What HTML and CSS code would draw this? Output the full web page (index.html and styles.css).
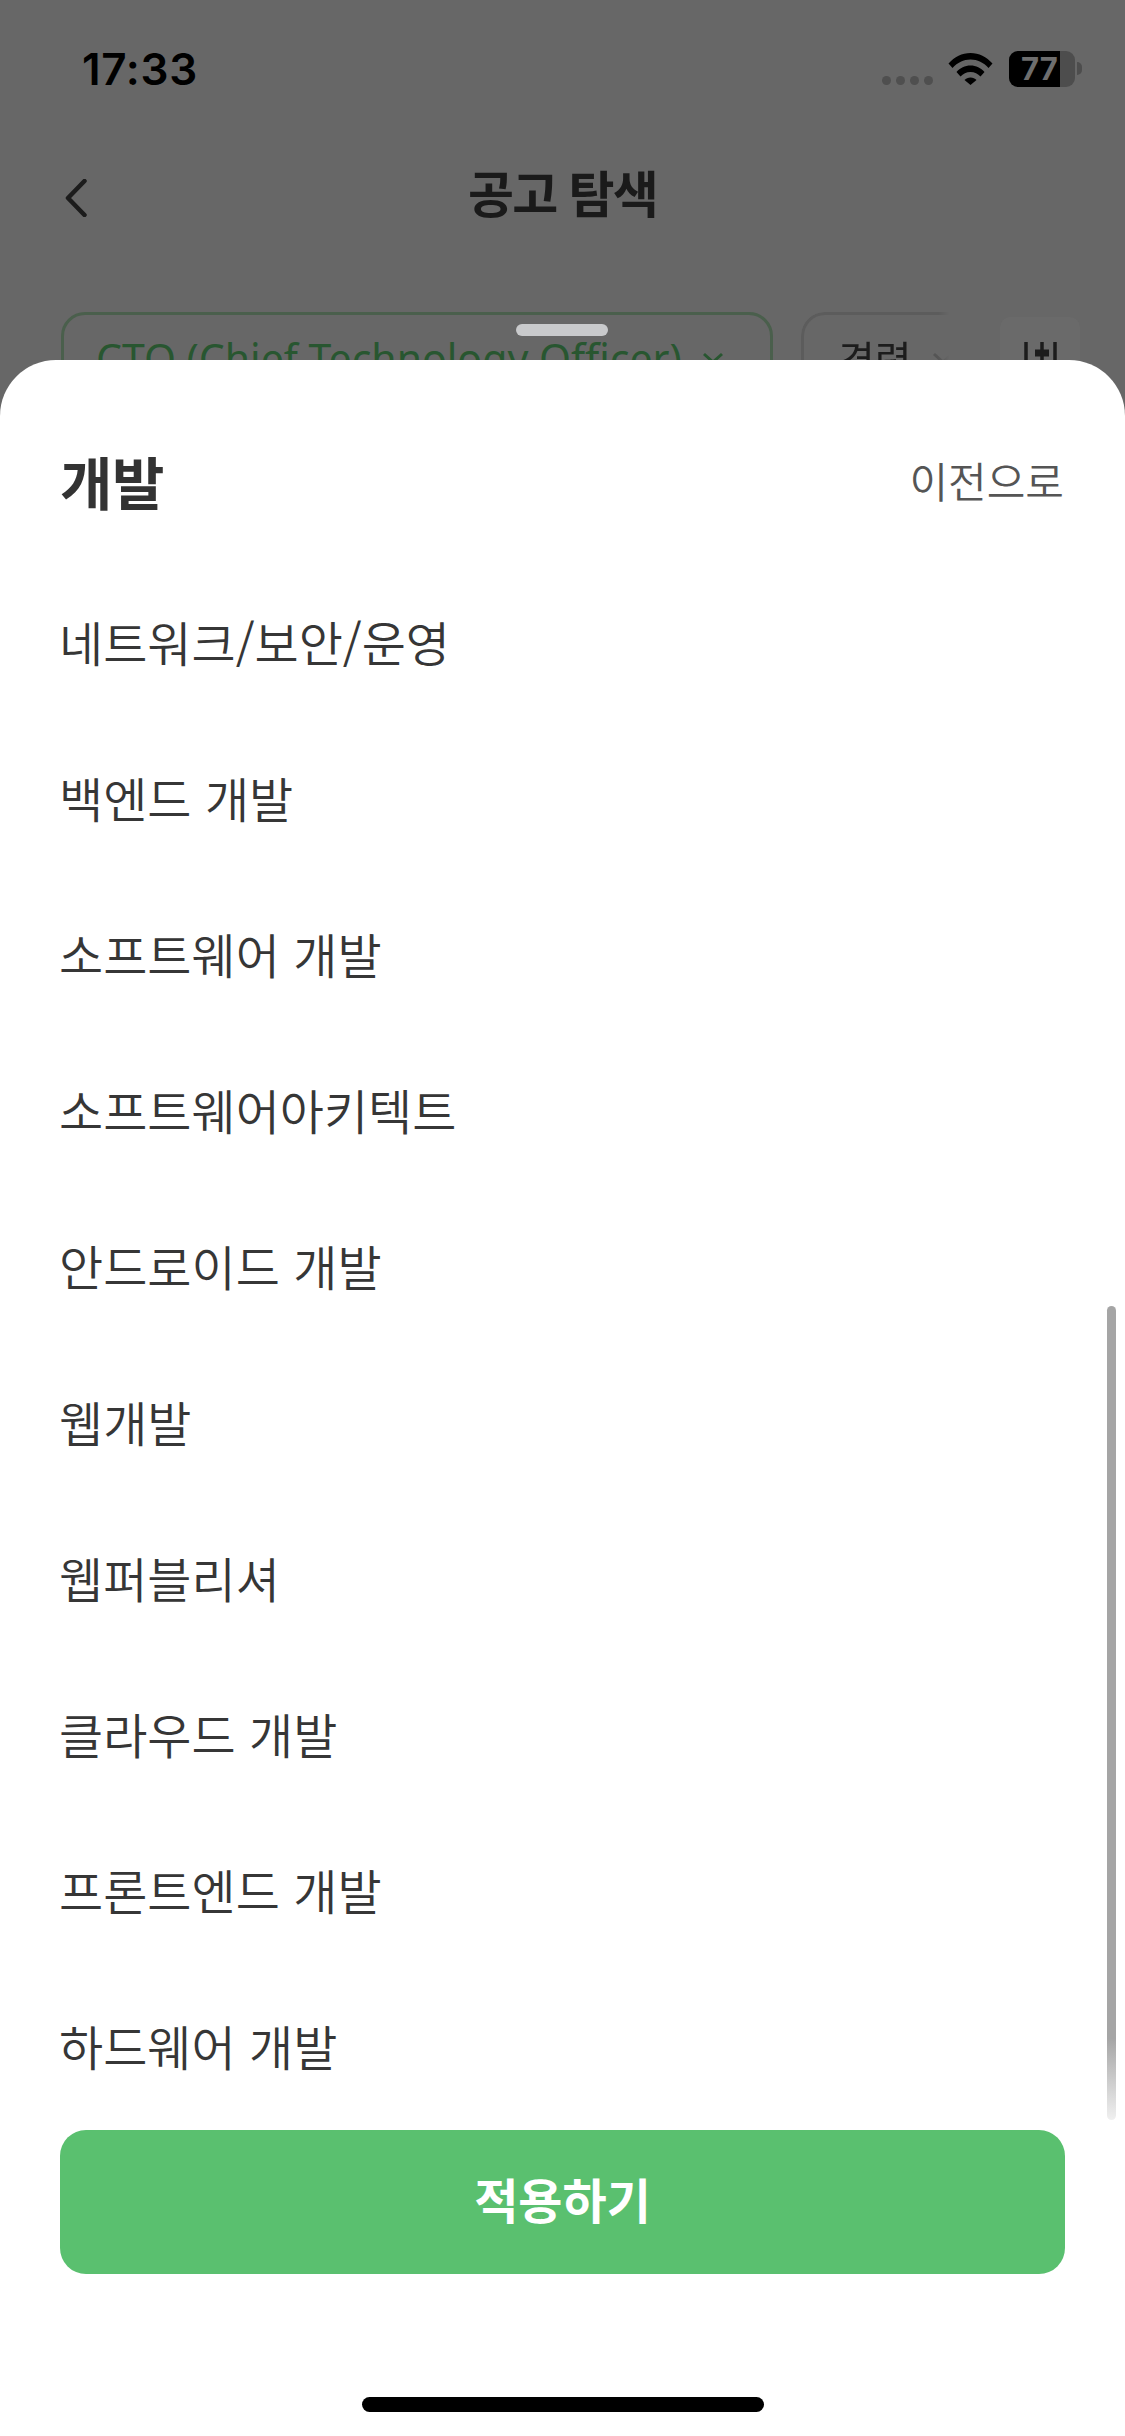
FILE: index.html
```html
<!DOCTYPE html>
<html lang="ko">
<head>
<meta charset="utf-8">
<title>공고 탐색</title>
<link rel="stylesheet" href="styles.css">
</head>
<body>
<div class="screen">
  <header class="status">
    <span class="time">17:33</span>
    <div class="status-right">
      <div class="signal"><i></i><i></i><i></i><i></i></div>
      <svg class="wifi" viewBox="0 0 45 33" aria-hidden="true">
        <path d="M0.5 11.5C6.5 5 14 1 22.5 1S38.5 5 44.500 11.500L40.500 16C35.500 10.500 29.500 7.500 22.500 7.500S9.500 10.500 4.500 16Z"/>
        <path d="M8.500 20C12 16 17 13.500 22.500 13.500S33 16 36.500 20L32.500 24.500C30 21.800 26.500 20 22.500 20S15 21.800 12.500 24.500Z"/>
        <path d="M16.500 28C18 26.500 20 25.500 22.500 25.500S27 26.500 28.500 28L22.500 33Z"/>
      </svg>
      <div class="battery"><span class="battery-fill">77</span></div>
      <span class="battery-nub"></span>
    </div>
  </header>
  <nav class="nav">
    <svg class="back" viewBox="0 0 22 38" aria-hidden="true"><path d="M19.500 2L3 19l16.500 17"/></svg>
    <h1 class="nav-title">공고 탐색</h1>
  </nav>
  <div class="filters">
    <div class="chip chip-active">CTO (Chief Technology Officer)<svg class="chip-caret" viewBox="0 0 22 12" aria-hidden="true"><path d="M2 2l9 8 9-8"/></svg></div>
    <div class="chip chip-plain">경력<svg class="chip-caret" viewBox="0 0 22 12" aria-hidden="true"><path d="M2 2l9 8 9-8"/></svg></div>
    <div class="filter-btn">
      <svg viewBox="0 0 36 40" aria-hidden="true">
        <path d="M4 0v30M20 0v30M33 0v30"/>
        <path class="knob" d="M13 11h14"/>
      </svg>
    </div>
  </div>

  <section class="sheet">
    <span class="grabber"></span>
    <div class="sheet-head">
      <h2 class="sheet-title">개발</h2>
      <span class="sheet-back">이전으로</span>
    </div>
    <ul class="list">
      <li>네트워크/보안/운영</li>
      <li>백엔드 개발</li>
      <li>소프트웨어 개발</li>
      <li>소프트웨어아키텍트</li>
      <li>안드로이드 개발</li>
      <li>웹개발</li>
      <li>웹퍼블리셔</li>
      <li>클라우드 개발</li>
      <li>프론트엔드 개발</li>
      <li>하드웨어 개발</li>
    </ul>
    <span class="scroll-thumb"></span>
    <button class="apply">적용하기</button>
    <div class="home"></div>
  </section>
</div>
</body>
</html>
```
FILE: styles.css
```css
* { box-sizing: border-box; }
html, body { margin: 0; padding: 0; }
body {
  font-family: "Noto Sans CJK KR", "Noto Sans", sans-serif;
  background: #666;
}
.screen {
  position: relative;
  width: 1125px;
  height: 2436px;
  overflow: hidden;
  background: #676767;
}
.status {
  display: flex;
  justify-content: space-between;
  align-items: flex-start;
  height: 146px;
  padding: 44px 43px 0 82px;
}
.time {
  font-family: Inter, "Liberation Sans", sans-serif;
  font-weight: 600;
  font-size: 44px;
  letter-spacing: 0.7px;
  line-height: 50px;
  color: #000;
}
.status-right {
  display: flex;
  align-items: flex-start;
  padding-top: 7px;
}
.signal {
  display: flex;
  gap: 5px;
  margin-top: 25px;
  margin-right: 15px;
}
.signal i {
  width: 9px;
  height: 9px;
  border-radius: 50%;
  background: #4f4f4f;
}
.wifi {
  width: 45px;
  height: 33px;
  margin-top: 1px;
  margin-right: 16px;
  fill: #000;
}
.battery {
  width: 66px;
  height: 36px;
  border-radius: 9px;
  overflow: hidden;
  background: #4d4d4d;
}
.battery-fill {
  display: block;
  width: 51px;
  height: 36px;
  padding-left: 12px;
  background: #000;
  color: #6e6e6e;
  font-family: Inter, "Liberation Sans", sans-serif;
  font-weight: 700;
  font-size: 31px;
  line-height: 36px;
  white-space: nowrap;
}
.battery-nub {
  width: 5px;
  height: 13px;
  margin: 11px 0 0 2px;
  border-radius: 0 5px 5px 0;
  background: #4d4d4d;
}
.nav {
  display: grid;
  grid-template-columns: 1fr auto 1fr;
  align-items: center;
  height: 90px;
}
.back {
  justify-self: start;
  margin-left: 65px;
  margin-top: 14px;
  width: 22px;
  height: 38px;
  fill: none;
  stroke: #1c1c1c;
  stroke-width: 4.500;
  stroke-linecap: round;
  stroke-linejoin: round;
}
.nav-title {
  margin: 0;
  font-size: 50px;
  font-weight: 700;
  letter-spacing: -1.8px;
  line-height: 90px;
  color: #1a1a1a;
}
.filters {
  display: flex;
  align-items: flex-start;
  margin-top: 76px;
  padding-left: 61px;
}
.chip {
  display: flex;
  align-items: center;
  height: 92px;
  border-radius: 24px;
  white-space: nowrap;
}
.chip-active {
  width: 712px;
  padding-left: 32px;
  border: 3px solid #4a5f4c;
  color: #285630;
  font-family: "Noto Sans", sans-serif;
  font-size: 41px;
}
.chip-plain {
  width: 190px;
  margin-left: 28px;
  padding-left: 34px;
  border: 3px solid #5c5c5c;
  border-right: 0;
  border-radius: 24px 0 0 24px;
  color: #1c1c1c;
  font-size: 40px;
  -webkit-mask-image: linear-gradient(90deg, #000 72%, transparent 78%);
  mask-image: linear-gradient(90deg, #000 72%, transparent 78%);
}
.chip-caret {
  flex: none;
  width: 22px;
  height: 12px;
  margin-left: 20px;
  fill: none;
  stroke: currentColor;
  stroke-width: 3;
}
.chip-plain .chip-caret {
  color: #555;
}
.filter-btn {
  flex: none;
  width: 80px;
  height: 90px;
  margin: 5px 0 0 9px;
  border-radius: 10px;
  background: #6a6a6a;
  padding: 25px 22px 0;
}
.filter-btn svg {
  display: block;
  width: 36px;
  height: 40px;
  stroke: #1c1c1c;
  stroke-width: 3.500;
  fill: none;
}
.knob {
  stroke-width: 7;
}
.sheet {
  position: absolute;
  left: 0;
  right: 0;
  top: 360px;
  bottom: 0;
  display: flex;
  flex-direction: column;
  background: #fff;
  border-radius: 56px 56px 0 0;
}
.grabber {
  position: absolute;
  left: 516px;
  top: -36px;
  width: 92px;
  height: 12px;
  border-radius: 6px;
  background: #c9cacc;
}
.sheet-head {
  display: flex;
  justify-content: space-between;
  align-items: center;
  height: 84px;
  margin-top: 78px;
  padding: 0 61px 0 60px;
}
.sheet-title {
  margin: 0;
  font-size: 57px;
  font-weight: 700;
  letter-spacing: -0.5px;
  line-height: 84px;
  color: #333;
}
.sheet-back {
  font-size: 42px;
  font-weight: 350;
  line-height: 84px;
  color: #555;
}
.list {
  list-style: none;
  margin: 41px 0 0;
  padding: 0 60px 0 59px;
  height: 1562px;
  font-weight: 350;
}
.list li {
  height: 156px;
  font-size: 48px;
  line-height: 156px;
  color: #363636;
  white-space: nowrap;
}
.scroll-thumb {
  position: absolute;
  left: 1107px;
  top: 946px;
  width: 9px;
  height: 814px;
  border-radius: 5px;
  background: linear-gradient(180deg, #a5a5a5 0, #a5a5a5 90%, #f0f0f0 100%);
}
.apply {
  flex: none;
  height: 144px;
  margin: 5px 60px 0;
  padding: 0 0 8px;
  border: 0;
  border-radius: 26px;
  background: #5ac06f;
  color: #fff;
  font-family: inherit;
  font-size: 48px;
  font-weight: 700;
}
.home {
  flex: none;
  width: 402px;
  height: 15px;
  margin: 123px auto 0;
  border-radius: 8px;
  background: #000;
}
```
